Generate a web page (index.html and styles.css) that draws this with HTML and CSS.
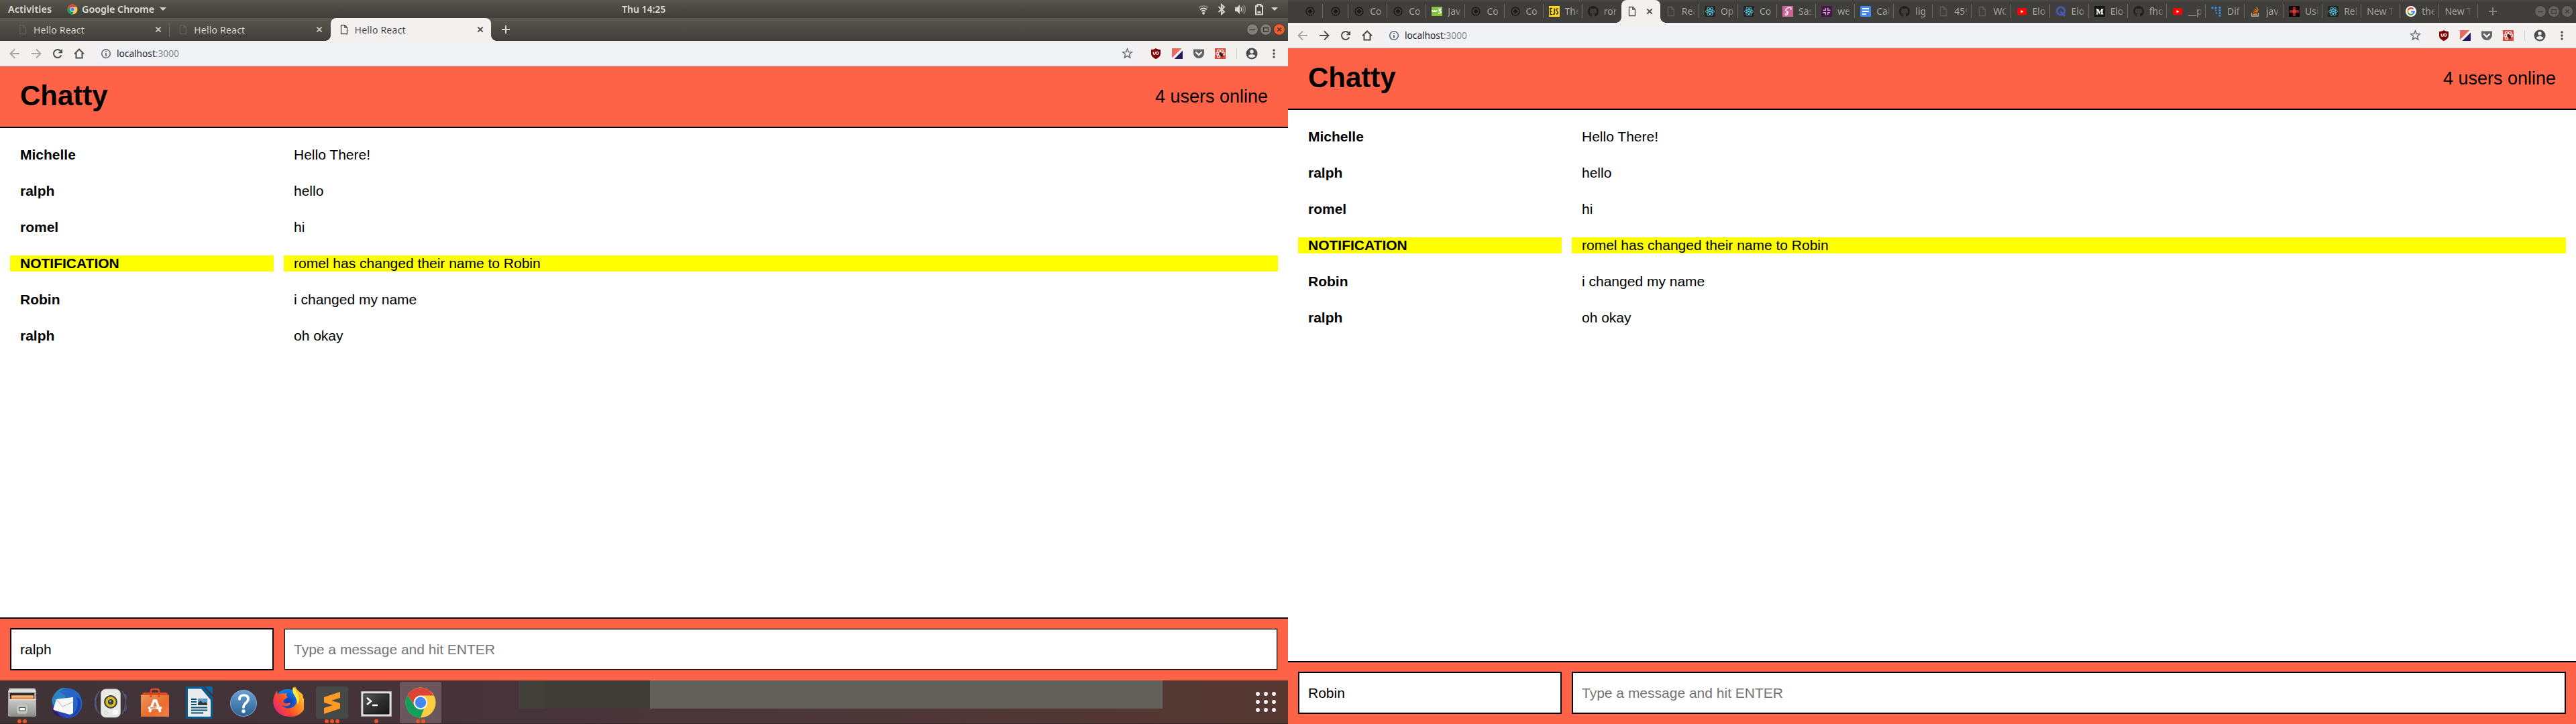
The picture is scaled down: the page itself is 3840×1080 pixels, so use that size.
FILE: index.html
```html
<!DOCTYPE html>
<html lang="en">
<head>
<meta charset="utf-8">
<title>Hello React</title>
<link rel="stylesheet" href="styles.css">
</head>
<body>
<svg class="defs" width="0" height="0">
  <defs>
    <linearGradient id="gFile" x1="0" y1="0" x2="0" y2="1"><stop offset="0" stop-color="#c9c9c8"/><stop offset="1" stop-color="#8d8d8c"/></linearGradient>
    <linearGradient id="gBag" x1="0" y1="0" x2="1" y2="1"><stop offset="0" stop-color="#e9965a"/><stop offset=".6" stop-color="#ec6c2e"/><stop offset="1" stop-color="#ee8350"/></linearGradient>
    <linearGradient id="gHelp" x1="0" y1="0" x2="0" y2="1"><stop offset="0" stop-color="#6da1d4"/><stop offset="1" stop-color="#2a6291"/></linearGradient>
    <linearGradient id="gBird" x1="0" y1="1" x2="1" y2="0"><stop offset="0" stop-color="#3a2fa0"/><stop offset=".5" stop-color="#1b5fc4"/><stop offset="1" stop-color="#1e6fd0"/></linearGradient>
    <linearGradient id="gFox" x1="0" y1=".8" x2="1" y2=".2"><stop offset="0" stop-color="#e3217c"/><stop offset=".35" stop-color="#ff4a2c"/><stop offset=".7" stop-color="#ff9a1c"/><stop offset="1" stop-color="#ffe83c"/></linearGradient>
    <radialGradient id="gGlobe"><stop offset="0" stop-color="#1d2fa8"/><stop offset="1" stop-color="#0a84f0"/></radialGradient>
    <linearGradient id="gTerm" x1="0" y1="0" x2="1" y2="1"><stop offset="0" stop-color="#5a5a5a"/><stop offset=".5" stop-color="#303030"/><stop offset="1" stop-color="#161616"/></linearGradient>
  </defs>
  <symbol id="page" viewBox="0 0 12 16"><path d="M1.5 1.5h5.5l3.5 3.5v9.500h-9zM6.800 1.500v3.700h3.700" fill="none" stroke="currentColor" stroke-width="1.300"/></symbol>
  <symbol id="close" viewBox="0 0 10 10"><path d="M1.300 1.300l7.400 7.400M8.700 1.300l-7.400 7.400" stroke="currentColor" stroke-width="1.900"/></symbol>
  <symbol id="plus" viewBox="0 0 12 12"><path d="M6 0v12M0 6h12" stroke="currentColor" stroke-width="2"/></symbol>
  <symbol id="back" viewBox="0 0 16 16"><path d="M15 8H2.500M8 1.500L1.500 8L8 14.500" fill="none" stroke="currentColor" stroke-width="2"/></symbol>
  <symbol id="forward" viewBox="0 0 16 16"><path d="M1 8h12.500M8 1.500L14.500 8L8 14.500" fill="none" stroke="currentColor" stroke-width="2"/></symbol>
  <symbol id="reload" viewBox="0 0 16 16"><path d="M13.400 10.500A6 6 0 1 1 12.300 3.800" fill="none" stroke="currentColor" stroke-width="2"/><path d="M15 1v6.300H8.700z" fill="currentColor"/></symbol>
  <symbol id="home" viewBox="0 0 16 16"><path d="M1 8.500L8 1.500L15 8.500M3.500 7v7.500h9V7" fill="none" stroke="currentColor" stroke-width="2"/></symbol>
  <symbol id="info" viewBox="0 0 16 16"><circle cx="8" cy="8" r="6.300" fill="none" stroke="currentColor" stroke-width="1.500"/><path d="M8 7v5M8 4.200v1.800" stroke="currentColor" stroke-width="1.700"/></symbol>
  <symbol id="star" viewBox="0 0 16 16"><path d="M8 1.800l1.800 4.300 4.600.4-3.500 3 1.100 4.600-4-2.500-4 2.500 1.100-4.600-3.500-3 4.600-.4z" fill="none" stroke="currentColor" stroke-width="1.300"/></symbol>
  <symbol id="ublock" viewBox="0 0 16 16"><path d="M8 0c2 1.400 4.500 2 7 2v6c0 4-3.500 6.500-7 8c-3.500-1.500-7-4-7-8V2c2.500 0 5-.6 7-2z" fill="#7e0004"/><path d="M4.200 5.200v2.600a1.500 1.500 0 0 0 3 0V5.200" fill="none" stroke="#fff" stroke-width="1.200"/><circle cx="10" cy="7.300" r="1.900" fill="none" stroke="#fff" stroke-width="1.200"/></symbol>
  <symbol id="split" viewBox="0 0 16 16"><path d="M0 0h16v16H0z" fill="#f5f3f2"/><path d="M0 0h14.500L0 14.500z" fill="#e8695f"/><path d="M16 3.500V16H3.500z" fill="#211a5e"/></symbol>
  <symbol id="pocket" viewBox="0 0 16 16"><path d="M0 1.500h16v5.500a8 8 0 0 1-16 0z" fill="#646464"/><path d="M4 6l4 3.800L12 6" fill="none" stroke="#fff" stroke-width="2.300" stroke-linecap="round"/></symbol>
  <symbol id="flower" viewBox="0 0 16 16"><path d="M0 0h16v16H0z" fill="#dc4a3d"/><g fill="none" stroke="#fff" stroke-width="1.200"><circle cx="5.500" cy="4" r="2"/><circle cx="10.500" cy="4" r="2"/><circle cx="3.500" cy="8" r="2"/><circle cx="12.500" cy="8" r="2"/><circle cx="5.500" cy="12" r="2"/></g><path d="M7 7l2-1 2.500 2 1 4-2.500 1-2-2-1.500-2z" fill="#43211e"/></symbol>
  <symbol id="person" viewBox="0 0 18 18"><circle cx="9" cy="9" r="8.500" fill="#4d4d4d"/><circle cx="9" cy="6" r="2.700" fill="#f2f1f0"/><path d="M3.700 12.500c1-2 3.500-2.600 5.300-2.600s4.300.6 5.300 2.600c-1.500 2-3.500 2.600-5.300 2.600s-3.800-.6-5.300-2.600z" fill="#f2f1f0"/></symbol>
  <symbol id="dots" viewBox="0 0 4 14"><g fill="#4d4d4d"><circle cx="2" cy="2" r="1.700"/><circle cx="2" cy="7" r="1.700"/><circle cx="2" cy="12" r="1.700"/></g></symbol>
  <symbol id="chrome" viewBox="0 0 48 48"><circle cx="24" cy="24" r="22.500" fill="#fdce3f"/><path d="M4.500 12.800A22.500 22.500 0 0 1 43.500 13.500H24A10.500 10.500 0 0 0 14 27z" fill="#dc4437"/><path d="M4.500 12.800L15 29a10.500 10.500 0 0 0 14 4L24 46.500A22.500 22.500 0 0 1 4.500 12.800z" fill="#119f5a"/><circle cx="24" cy="24" r="10.300" fill="#f3f3f3"/><circle cx="24" cy="24" r="8.200" fill="#4387f5"/></symbol>
  <symbol id="codepen" viewBox="0 0 16 16"><circle cx="8" cy="8" r="5.900" fill="none" stroke="#171715" stroke-width="1.500"/><path d="M8 5L11 8L8 11L5 8zM8 4.500v7M4.500 8h7" fill="none" stroke="#171715" stroke-width="1.100"/></symbol>
  <symbol id="w3" viewBox="0 0 16 16"><path d="M0 1h16v14H0z" fill="#84c141"/><path d="M1 6c0 3 3 3 3 0c0 3 3.500 3 3.500 0M10 4.500h3.500L11.500 7c4 0 3 5-1.500 3.500" fill="none" stroke="#fff" stroke-width="1.600"/></symbol>
  <symbol id="ejs" viewBox="0 0 16 16"><path d="M0 0h16v16H0z" fill="#ffd81c"/><path d="M5 3.500H2v9h3M2 8h2.500M8.300 3.500v7c0 2-1.300 2-2.300 1.500M14 4.500c-3-2-4 1.500-2 3s2 5-1.500 4" fill="none" stroke="#222" stroke-width="1.500"/></symbol>
  <symbol id="github" viewBox="0 0 16 16"><path fill="#20201e" d="M8 0C3.580 0 0 3.580 0 8c0 3.540 2.290 6.530 5.470 7.590.4.070.55-.17.55-.38v-1.490c-2.010.37-2.530-.49-2.690-.94-.09-.23-.48-.94-.82-1.130-.28-.15-.68-.52-.01-.53.630-.010 1.080.580 1.230.820.720 1.210 1.870.870 2.330.660.070-.520.280-.870.510-1.070-1.780-.200-3.640-.890-3.640-3.950 0-.870.310-1.590.820-2.150-.080-.200-.360-1.020.080-2.120 0 0 .670-.210 2.200.820a7.700 7.700 0 0 1 4 0c1.530-1.040 2.200-.820 2.200-.820.440 1.100.160 1.920.080 2.120.510.560.820 1.270.820 2.150 0 3.070-1.870 3.750-3.650 3.950.290.250.540.730.540 1.480v2.200c0 .210.150.460.550.380A8 8 0 0 0 16 8c0-4.420-3.580-8-8-8z"/></symbol>
  <symbol id="react" viewBox="0 0 16 16"><rect width="16" height="16" rx="2" fill="#222425"/><g fill="none" stroke="#5ac8e0" stroke-width=".9"><ellipse cx="8" cy="8" rx="6.600" ry="2.500"/><ellipse cx="8" cy="8" rx="6.600" ry="2.500" transform="rotate(60 8 8)"/><ellipse cx="8" cy="8" rx="6.600" ry="2.500" transform="rotate(120 8 8)"/></g><circle cx="8" cy="8" r="1.300" fill="#5ac8e0"/></symbol>
  <symbol id="sass" viewBox="0 0 16 16"><path d="M0 0h16v16H0z" fill="#cf649a"/><path d="M12 5.500c3-3-2-4.500-5-2S4.500 7 7 8s1 5-1 5.500s-2.500-2 1-4" fill="none" stroke="#fff" stroke-width="1.400"/></symbol>
  <symbol id="slack" viewBox="0 0 16 16"><path d="M0 0h16v16H0z" fill="#4a154b"/><path d="M6.300 3v4M9.700 2.500v4.500M6.300 9v4.500M9.700 9v4M2.500 6.300h4M9 6.300h4.500M2.500 9.700h4.500M9 9.700h4" stroke="#bfa5bd" stroke-width="1.500"/></symbol>
  <symbol id="docs" viewBox="0 0 16 16"><rect width="16" height="16" rx="1" fill="#4285f4"/><path d="M3 4h10M3 8h10M3 12h6" stroke="#fff" stroke-width="2"/></symbol>
  <symbol id="youtube" viewBox="0 0 16 16"><rect x="1" y="3" width="14" height="10.500" rx="2.500" fill="#f00"/><path d="M6.500 6v4.500l4-2.250z" fill="#fff"/></symbol>
  <symbol id="quokka" viewBox="0 0 16 16"><circle cx="8" cy="7.500" r="5.800" fill="none" stroke="#4858b0" stroke-width="3"/><path d="M7.500 8l6.500 7" stroke="#4858b0" stroke-width="3"/></symbol>
  <symbol id="medium" viewBox="0 0 16 16"><path d="M0 0h16v16H0z" fill="#161615"/><path d="M2.500 4h3.300L8.300 9l2.200-5h3v1l-1 .5v5.500l1 .5v1H9.300v-1l1-.5V7L7.500 12.500L4.700 7v4l1.200 1v.5h-3.400V12l1-.8V5.500l-1-.8z" fill="#fff"/></symbol>
  <symbol id="digits" viewBox="0 0 16 16"><g fill="#3a8fd6"><circle cx="2" cy="2.500" r="1.700"/><circle cx="7" cy="2.500" r="1.700"/><circle cx="13" cy="2.500" r="1.700"/><circle cx="7" cy="6.500" r="1.300"/><circle cx="13" cy="6.500" r="1.700"/><circle cx="13" cy="10.500" r="1.700"/><circle cx="8" cy="10.500" r="1.300"/><circle cx="13" cy="14.300" r="1.600"/></g></symbol>
  <symbol id="stack" viewBox="0 0 16 16"><path d="M2.500 10v5h10v-5" fill="none" stroke="#b4b2ad" stroke-width="1.300"/><path d="M4.500 12.700h6M4.600 10.200l6 .8M5.300 7.200l5.600 2M7 4.300l4.700 3.700M9.500 1.500l3 5" stroke="#ef7b22" stroke-width="1.400"/></symbol>
  <symbol id="cross" viewBox="0 0 16 16"><path d="M0 0h16v16H0z" fill="#0c0808"/><path d="M8 1v14M1 8h14" stroke="#a21c26" stroke-width="4"/><circle cx="8" cy="8" r="2.800" fill="#c8442a"/></symbol>
  <symbol id="google" viewBox="0 0 16 16"><circle cx="8" cy="8" r="8" fill="#fff"/><g fill="none" stroke-width="2.300"><path d="M11.600 4.700A4.800 4.800 0 0 0 3.700 5.900" stroke="#ea4335"/><path d="M3.700 5.900a4.800 4.800 0 0 0 0 4.300" stroke="#fbbc05"/><path d="M3.700 10.200a4.800 4.800 0 0 0 7.600 1.300" stroke="#34a853"/><path d="M11.300 11.500A4.800 4.800 0 0 0 12.800 8.300H8" stroke="#4285f4"/></g></symbol>
</svg>

<div class="screen">
  <div class="topbar">
    <span class="activities">Activities</span>
    <svg class="app-icon"><use href="#chrome"/></svg>
    <span class="app-name">Google Chrome</span>
    <span class="caret"></span>
    <div class="status">
      <svg width="16" height="16" viewBox="0 0 16 16"><path d="M1 5.500a10.500 10.500 0 0 1 14 0" fill="none" stroke="#8b8983" stroke-width="1.800"/><path d="M3 8.300a7.500 7.500 0 0 1 10 0M5.200 11a4.300 4.300 0 0 1 5.600 0" fill="none" stroke="#dcdad5" stroke-width="1.900"/><circle cx="8" cy="13.800" r="1.900" fill="#dcdad5"/></svg>
      <svg width="12" height="18" viewBox="0 0 12 18"><path d="M1.500 5l8.500 7.500L6 16V2l4 3.500L1.500 13" fill="none" stroke="#d4d2cd" stroke-width="2.100"/></svg>
      <svg width="17" height="16" viewBox="0 0 17 16"><path d="M1 5h3l4-4v14L4 11H1z" fill="#dcdad5"/><path d="M9.500 5a4 4 0 0 1 0 6" fill="none" stroke="#dcdad5" stroke-width="1.500"/><path d="M11.500 3a7 7 0 0 1 0 10M13.800 1.200a10 10 0 0 1 0 13.600" fill="none" stroke="#85837d" stroke-width="1.500"/></svg>
      <svg width="14" height="18" viewBox="0 0 14 18"><path d="M4.500 2h5v2H12v12.500H2V4h2.500z" fill="none" stroke="#dcdad5" stroke-width="2"/><path d="M4.500 13h5" stroke="#dcdad5" stroke-width="2"/></svg>
      <span class="caret"></span>
    </div>
    <span class="clock">Thu 14:25</span>
  </div>

  <div class="tabstrip wide">
    <div class="tab"><svg class="page"><use href="#page"/></svg><span class="label">Hello React</span><svg class="close"><use href="#close"/></svg></div>
    <div class="tab last"><svg class="page"><use href="#page"/></svg><span class="label">Hello React</span><svg class="close"><use href="#close"/></svg></div>
    <div class="tab active"><svg class="page"><use href="#page"/></svg><span class="label">Hello React</span><svg class="close"><use href="#close"/></svg></div>
    <svg class="new-tab"><use href="#plus"/></svg>
    <div class="controls">
      <svg viewBox="0 0 18 18"><circle cx="9" cy="9" r="8.500" class="knob"/><path d="M5 9.500h8"/></svg>
      <svg viewBox="0 0 18 18"><circle cx="9" cy="9" r="8.500" class="knob"/><path d="M5.500 6.500h7v5.500h-7z"/></svg>
      <svg viewBox="0 0 18 18"><circle cx="9" cy="9" r="8.500" class="knob red"/><path d="M6.200 6.200l5.600 5.600M11.800 6.200l-5.600 5.600"/></svg>
    </div>
  </div>

  <div class="toolbar">
    <svg class="nav off"><use href="#back"/></svg><svg class="nav off"><use href="#forward"/></svg><svg class="nav"><use href="#reload"/></svg><svg class="nav"><use href="#home"/></svg>
    <div class="omnibox"><svg class="info"><use href="#info"/></svg><span class="url">localhost<span class="port">:3000</span></span><svg class="star"><use href="#star"/></svg></div>
    <div class="extensions"><svg><use href="#ublock"/></svg><svg><use href="#split"/></svg><svg><use href="#pocket"/></svg><svg><use href="#flower"/></svg></div>
    <span class="rule"></span>
    <svg class="person"><use href="#person"/></svg><svg class="menu"><use href="#dots"/></svg>
  </div>

  <div class="chat">
    <header class="chat-header"><h1>Chatty</h1><span class="online">4 users online</span></header>
    <main class="messages">
      <div class="message"><span class="user">Michelle</span><span class="content">Hello There!</span></div>
      <div class="message"><span class="user">ralph</span><span class="content">hello</span></div>
      <div class="message"><span class="user">romel</span><span class="content">hi</span></div>
      <div class="message notification"><span class="user">NOTIFICATION</span><span class="content">romel has changed their name to Robin</span></div>
      <div class="message"><span class="user">Robin</span><span class="content">i changed my name</span></div>
      <div class="message"><span class="user">ralph</span><span class="content">oh okay</span></div>
    </main>
    <footer class="chatbar"><input value="ralph"><input class="focused" placeholder="Type a message and hit ENTER"></footer>
  </div>

  <div class="dock">
    <div class="launcher"><svg viewBox="0 0 48 48"><path d="M5 3h38l2 5v36H3V8z" fill="#a9a9a8"/><path d="M5 3h38l2 5H3z" fill="#dededd"/><path d="M6 10h36v12H6z" fill="#302a28"/><path d="M8 13h33v8H8z" fill="#e8823a"/><path d="M8 15.500h33" stroke="#ffe2b4" stroke-width="1.600"/><path d="M4 20h40v25H4z" fill="url(#gFile)"/><path d="M4 19.500h40" stroke="#ddd" stroke-width="1.500"/><rect x="17" y="28" width="14" height="12" rx="2" fill="#bcbcbb" stroke="#d5d5d5"/><path d="M20 31.500h8.500v4.500H20z" fill="#fff" stroke="#555" stroke-width="1.200"/></svg><span class="pips"><i></i><i></i></span></div>
    <div class="launcher"><svg viewBox="0 0 48 48"><circle cx="25" cy="25" r="22.500" fill="url(#gBird)"/><path d="M4 15C9 4 20-3 31 6c-6 2-8 8-9 13L8 30C2 27 1 20 4 15z" fill="#2c83c4"/><path d="M14 8c7-6 15-7 21-2l9 14-8 20-5-20z" fill="#2766c6"/><path d="M9 19l25-3 0 24-5 2-25-7z" fill="#f7f7f8"/><path d="M9 19l9 11 16-7" fill="none" stroke="#b5b8c0"/><path d="M3 33l9 7c0 3 4 5 8 6C10 46 4 41 3 33z" fill="#301b68"/><path d="M38 15c5 7 4 20-7 30 12-3 17-16 13-26" fill="#1b3fb5"/></svg></div>
    <div class="launcher"><svg viewBox="0 0 48 48"><path d="M7 7a30 30 0 0 0 0 34M4 11a24 24 0 0 0 0 26M41 7a30 30 0 0 1 0 34M45 11a24 24 0 0 1 0 26" fill="none" stroke="#4b5c7d" stroke-width="1.500"/><rect x="9.500" y="4" width="29" height="42" rx="7" fill="#e9e9e8" stroke="#bdbdbb"/><circle cx="24" cy="23" r="10" fill="#444"/><circle cx="24" cy="23" r="7.700" fill="#d9bd1c"/><circle cx="24" cy="23" r="4" fill="#303840"/><circle cx="23.500" cy="22" r="1.600" fill="#aaa"/><rect x="27" y="35" width="8" height="7" rx="3" fill="#fafafa"/><circle cx="17" cy="39" r="2.500" fill="none" stroke="#ccc"/></svg></div>
    <div class="launcher"><svg viewBox="0 0 48 48"><path d="M3 13l4-4h34l4 4z" fill="#d84b20"/><path d="M3 13h42v32H3z" fill="url(#gBag)"/><path d="M18 16V7q0-3 3-3h6q3 0 3 3v9" fill="none" stroke="#d9481e" stroke-width="2.700"/><path d="M16 38l6.500-17h3L32 38" fill="none" stroke="#fff" stroke-width="3.600"/><path d="M15.500 32h17" stroke="#fff" stroke-width="4" stroke-linecap="round"/><path d="M17 32h9" stroke="#ed7035" stroke-width="1.500"/></svg></div>
    <div class="launcher"><svg viewBox="0 0 48 48"><path d="M6 0h24l14 16v30q0 2-2 2H6q-2 0-2-2V2q0-2 2-2z" fill="#075b8e"/><path d="M32 0h10q2 0 2 2v10z" fill="#0769a4"/><path d="M7 3.500h20L41 20v25H7z" fill="#e9ebec"/><path d="M12 19h8M12 23h8M12 27h8M12 31.500h24M12 35.500h24M12 39.500h18" stroke="#08527d" stroke-width="1.900"/><path d="M22 18h14v10H22z" fill="#5c9dce"/><path d="M22 28v-3l4-4 4 4 3-2 3 3v2z" fill="#303b32"/></svg></div>
    <div class="launcher"><svg viewBox="0 0 48 48"><circle cx="24" cy="25" r="19.500" fill="url(#gHelp)" stroke="#78abd9" stroke-width="1"/><path d="M18 19c-1-8 14-8 13 0c0 5-7 6-7 12" fill="none" stroke="#fff" stroke-width="3.700" stroke-linecap="round"/><circle cx="24" cy="37" r="2.700" fill="#fff"/></svg></div>
    <div class="launcher"><svg viewBox="0 0 48 48"><circle cx="24" cy="24" r="20" fill="url(#gGlobe)"/><path d="M8 6l1 6 7-2c2 0 4 2 7-1-2 4-1 5 1 7l-6 4c-1 3-1 4 2 5 3 2 6-2 8 0-2 7-14 4-14 1 3 9 20 9 23-2 1-8-4-11-5-18 0-3 1-4 3-6 2 5 7 8 11 12l1 6c3-1 4-1 4 0 3 9-4 27-22 27C5 46-5 24 8 6z" fill="url(#gFox)"/><path d="M32 1c-4 11 8 15 6 26 6-5 2-19-6-26z" fill="#ffe944"/></svg></div>
    <div class="launcher"><svg viewBox="0 0 48 48"><rect width="48" height="48" rx="3" fill="#464747"/><path d="M12 16l24-8v9L23 21l13 4v8l-24 8v-9l13-4-13-4z" fill="#ff9a22"/></svg><span class="pips"><i></i><i></i><i></i></span></div>
    <div class="launcher"><svg viewBox="0 0 48 48"><path d="M1.500 7.500h45v37h-45z" fill="#dededd" stroke="#a8a8a8"/><path d="M5 11h38v30H5z" fill="url(#gTerm)" stroke="#111"/><path d="M10 17l6 5-6 5M18 28h8" fill="none" stroke="#fff" stroke-width="2.500"/></svg><span class="pips"><i></i></span></div>
    <div class="launcher current"><svg viewBox="0 0 48 48"><use href="#chrome"/></svg><span class="pips"><i></i><i></i></span></div>
    <div class="preview"></div>
    <div class="apps"><i></i><i></i><i></i><i></i><i></i><i></i><i></i><i></i><i></i></div>
  </div>
</div>

<div class="screen">
  <div class="tabstrip packed">
    <div class="tab pinned"><svg><use href="#codepen"/></svg></div>
    <div class="tab pinned"><svg><use href="#codepen"/></svg></div>
    <div class="tab"><svg><use href="#codepen"/></svg><span class="label">Co</span></div>
    <div class="tab"><svg><use href="#codepen"/></svg><span class="label">Co</span></div>
    <div class="tab"><svg><use href="#w3"/></svg><span class="label">Jav</span></div>
    <div class="tab"><svg><use href="#codepen"/></svg><span class="label">Co</span></div>
    <div class="tab"><svg><use href="#codepen"/></svg><span class="label">Co</span></div>
    <div class="tab"><svg><use href="#ejs"/></svg><span class="label">The</span></div>
    <div class="tab last"><svg><use href="#github"/></svg><span class="label">ror</span></div>
    <div class="tab active"><svg class="page"><use href="#page"/></svg><svg class="close"><use href="#close"/></svg></div>
    <div class="tab"><svg class="page"><use href="#page"/></svg><span class="label">Rea</span></div>
    <div class="tab"><svg><use href="#react"/></svg><span class="label">Op</span></div>
    <div class="tab"><svg><use href="#react"/></svg><span class="label">Co</span></div>
    <div class="tab"><svg><use href="#sass"/></svg><span class="label">Sas</span></div>
    <div class="tab"><svg><use href="#slack"/></svg><span class="label">we</span></div>
    <div class="tab"><svg><use href="#docs"/></svg><span class="label">Cal</span></div>
    <div class="tab"><svg><use href="#github"/></svg><span class="label">lig</span></div>
    <div class="tab"><svg class="page"><use href="#page"/></svg><span class="label">459</span></div>
    <div class="tab"><svg class="page"><use href="#page"/></svg><span class="label">WC</span></div>
    <div class="tab"><svg><use href="#youtube"/></svg><span class="label">Elo</span></div>
    <div class="tab"><svg><use href="#quokka"/></svg><span class="label">Elo</span></div>
    <div class="tab"><svg><use href="#medium"/></svg><span class="label">Elo</span></div>
    <div class="tab"><svg><use href="#github"/></svg><span class="label">fho</span></div>
    <div class="tab"><svg><use href="#youtube"/></svg><span class="label">__p</span></div>
    <div class="tab"><svg><use href="#digits"/></svg><span class="label">Dif</span></div>
    <div class="tab"><svg><use href="#stack"/></svg><span class="label">jav</span></div>
    <div class="tab"><svg><use href="#cross"/></svg><span class="label">Usi</span></div>
    <div class="tab"><svg><use href="#react"/></svg><span class="label">Rel</span></div>
    <div class="tab"><span class="label long">New T</span></div>
    <div class="tab"><svg><use href="#google"/></svg><span class="label">the</span></div>
    <div class="tab"><span class="label long">New T</span></div>
    <svg class="new-tab"><use href="#plus"/></svg>
    <div class="controls dim">
      <svg viewBox="0 0 18 18"><circle cx="9" cy="9" r="8.500" class="knob"/><path d="M5 9.500h8"/></svg>
      <svg viewBox="0 0 18 18"><circle cx="9" cy="9" r="8.500" class="knob"/><path d="M5.500 6.500h7v5.500h-7z"/></svg>
      <svg viewBox="0 0 18 18"><circle cx="9" cy="9" r="8.500" class="knob"/><path d="M6.200 6.200l5.600 5.600M11.800 6.200l-5.600 5.600"/></svg>
    </div>
  </div>

  <div class="toolbar">
    <svg class="nav off"><use href="#back"/></svg><svg class="nav"><use href="#forward"/></svg><svg class="nav"><use href="#reload"/></svg><svg class="nav"><use href="#home"/></svg>
    <div class="omnibox"><svg class="info"><use href="#info"/></svg><span class="url">localhost<span class="port">:3000</span></span><svg class="star"><use href="#star"/></svg></div>
    <div class="extensions"><svg><use href="#ublock"/></svg><svg><use href="#split"/></svg><svg><use href="#pocket"/></svg><svg><use href="#flower"/></svg></div>
    <span class="rule"></span>
    <svg class="person"><use href="#person"/></svg><svg class="menu"><use href="#dots"/></svg>
  </div>

  <div class="chat">
    <header class="chat-header"><h1>Chatty</h1><span class="online">4 users online</span></header>
    <main class="messages">
      <div class="message"><span class="user">Michelle</span><span class="content">Hello There!</span></div>
      <div class="message"><span class="user">ralph</span><span class="content">hello</span></div>
      <div class="message"><span class="user">romel</span><span class="content">hi</span></div>
      <div class="message notification"><span class="user">NOTIFICATION</span><span class="content">romel has changed their name to Robin</span></div>
      <div class="message"><span class="user">Robin</span><span class="content">i changed my name</span></div>
      <div class="message"><span class="user">ralph</span><span class="content">oh okay</span></div>
    </main>
    <footer class="chatbar"><input value="Robin"><input placeholder="Type a message and hit ENTER"></footer>
  </div>
</div>
</body>
</html>
```
FILE: styles.css
```css
* { box-sizing: border-box; }
body { margin: 0; display: flex; width: 3840px; height: 1080px; overflow: hidden; background: #fff; font-family: "Noto Sans", sans-serif; }
svg { flex: none; display: block; }
.defs { position: absolute; }
.screen { width: 1920px; height: 1080px; display: flex; flex-direction: column; }

/* GNOME top bar */
.topbar { position: relative; flex: none; height: 27px; display: flex; align-items: center; padding: 0 15px 0 12px; background: linear-gradient(#57544b, #403e39); color: #dedcd6; font-size: 14.300px; font-weight: 600; white-space: nowrap; }
.activities { width: 88px; letter-spacing: .15px; }
.app-icon { width: 16px; height: 16px; margin-right: 6px; }
.app-name { width: 110px; }
.caret { border: 5px solid transparent; border-top-color: #d4d2cd; border-bottom: 0; margin-left: 6px; }
.status { margin-left: auto; display: flex; align-items: center; gap: 13px; }
.status .caret { margin-left: -2px; }
.clock { position: absolute; left: 927px; font-size: 14px; }

/* Browser tabs */
.tabstrip { flex: none; height: 34px; display: flex; align-items: center; background: linear-gradient(#59574e, #403e39); white-space: nowrap; }
.tab { flex: none; display: flex; align-items: center; height: 21px; border-right: 1px solid #6d6b65; }
.tab.last { border-color: transparent; }
.tab svg { width: 16px; height: 16px; }
.tab .page { width: 12px; color: #5f5e5b; }
.tab .close { width: 10px; height: 10px; color: #c9c7c1; margin-left: auto; }
.wide { padding-left: 14px; }
.wide .tab { width: 239.300px; padding: 0 11px 0 14px; }
.wide .label { margin-left: 10px; font-size: 14px; letter-spacing: .2px; color: #d3d0c9; }
.tab.active { position: relative; height: 34px; background: #f2f1f0; border: 0; border-radius: 8px 8px 0 0; }
.tab.active::before, .tab.active::after { content: ""; position: absolute; bottom: 0; width: 8px; height: 8px; }
.tab.active::before { left: -8px; background: radial-gradient(circle at 0 0, transparent 7.500px, #f2f1f0 8px); }
.tab.active::after { right: -8px; background: radial-gradient(circle at 100% 0, transparent 7.500px, #f2f1f0 8px); }
.active .page, .active .close, .wide .active .label { color: #4d4d4d; }
.new-tab { width: 12px; height: 12px; color: #d9d7d0; margin-left: 16px; }
.controls { margin-left: auto; display: flex; gap: 2px; padding-right: 4px; }
.controls svg { width: 18px; height: 18px; fill: none; stroke: #35342f; stroke-width: 1.300; }
.controls .knob { fill: #807e76; stroke: #3a3833; stroke-width: 1; }
.controls .red { fill: #ef5c2f; }
.dim svg { stroke: #3c3b37; }
.dim .knob { fill: #65635f; }

.packed { background: linear-gradient(#4b4945, #403f3b 4px, #403f3b); border-bottom: 1px solid #37343a; padding-left: 14px; }
.packed .tab { width: 58.080px; padding: 0 5px 0 8px; }
.packed .pinned { width: 38.100px; padding-left: 11px; }
.packed .page { margin: 0 2px; }
.packed .tab.active { padding-right: 11px; }
.packed .active .close { width: 10px; height: 10px; }
.packed .label { flex: 1; min-width: 0; margin-left: 8px; overflow: hidden; font-size: 14px; line-height: 20px; color: #a9a7a2; mask-image: linear-gradient(90deg, #000 13px, rgba(0, 0, 0, .75) 16px, transparent 21px); }
.packed .long { margin-left: 0; mask-image: linear-gradient(90deg, #000 28px, transparent 42px); }
.packed .new-tab { color: #85837e; margin-left: 16px; }

/* Browser toolbar */
.toolbar { flex: none; height: 38px; display: flex; align-items: center; background: #f2f1f0; border-bottom: 1px solid #c9c8c6; padding: 0 19px 0 14px; color: #4d4d4d; }
.nav { width: 16px; height: 16px; margin-right: 16px; }
.nav.off { color: #a6a6a5; }
.omnibox { flex: 1; height: 28px; margin-left: -1px; border-radius: 14px; background: #f1f2f5; display: flex; align-items: center; padding: 0 9px; }
.info { width: 16px; height: 16px; margin-right: 8px; color: #5f6368; }
.url { font-size: 13.700px; color: #222428; }
.port { color: #85888c; }
.star { width: 17px; height: 17px; margin-left: auto; color: #5f6368; }
.extensions { display: flex; gap: 16px; margin-left: 17px; }
.extensions svg { width: 16px; height: 16px; }
.rule { width: 1px; height: 16px; background: #cfcecc; margin: 0 13px 0 16px; }
.person { width: 18px; height: 18px; }
.menu { width: 4px; height: 14px; margin-left: 22px; }

/* Chatty */
.chat { flex: 1; min-height: 0; display: flex; flex-direction: column; background: #fff; font-family: "Liberation Sans", Arial, sans-serif; font-size: 21px; color: #000; }
.chat-header { flex: none; height: 92px; display: flex; align-items: center; justify-content: space-between; padding: 0 30px; background: tomato; border-bottom: 2px solid #000; }
.chat-header h1 { margin: 0 0 2px; font-size: 42px; line-height: 48px; }
.online { font-size: 27px; }
.messages { flex: 1; padding: 13px 15px; }
.message { display: grid; grid-template-columns: 393px 1fr; column-gap: 15px; margin: 15px 0 30px; line-height: 24px; }
.message span { padding: 0 15px; }
.user { font-weight: bold; }
.notification span { background: #ff0; }
.chatbar { flex: none; height: 94px; display: grid; grid-template-columns: 393px 1fr; column-gap: 15px; padding: 14px 15px 15px; background: tomato; border-top: 2px solid #000; }
.chatbar input { width: 100%; height: 63px; border: 2px solid #000; border-radius: 0; padding: 0 13px; background: #fff; font: inherit; color: #000; outline: 0; }
.chatbar input::placeholder { color: #757575; }
.chatbar .focused { border: 1px solid #b05a2c; box-shadow: inset 0 0 0 1px #000; padding: 0 14px; }

/* Dock */
.dock { flex: none; height: 65px; display: flex; align-items: center; background: linear-gradient(90deg, #3f3338, #47333a 40%, #4b363a 60%, #563831); border-bottom: 1px solid #33292d; }
.launcher { width: 62px; height: 62px; margin: 1px 2px 0; position: relative; display: flex; align-items: center; justify-content: center; border-radius: 3px; }
.launcher svg { width: 48px; height: 48px; }
.current { background: #6a565c; }
.pips { position: absolute; left: 0; right: 0; bottom: 0; display: flex; justify-content: center; gap: 2px; }
.pips i { width: 6px; height: 6px; border-radius: 50%; background: #ee5423; }
.preview { align-self: flex-start; width: 960px; height: 42px; margin-left: 113px; background: linear-gradient(90deg, #42423a 38px, #3e3c36 38px 196px, #62615c 196px); }
.apps { margin-left: auto; margin-right: 18px; display: grid; grid-template-columns: repeat(3, 6px); gap: 6px; }
.apps i { width: 6px; height: 6px; border-radius: 50%; background: #f2f0ef; }
```
